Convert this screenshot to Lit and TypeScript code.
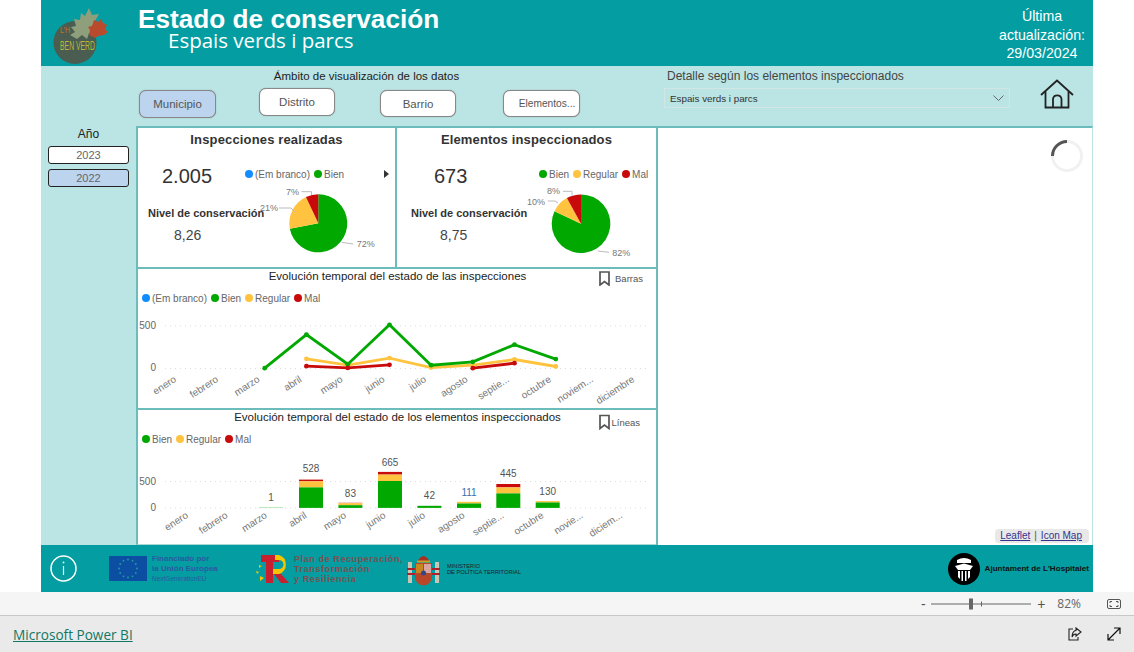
import { LitElement, html, css, svg } from "lit";
import { customElement } from "lit/decorators.js";

const GREEN = "#00a800";
const YELLOW = "#ffc33f";
const RED = "#c80a0a";
const BLUE = "#118dff";

type LegendItem = { label: string; color: string };

const legendBlue = { label: "(Em branco)", color: BLUE };
const legendGreen = { label: "Bien", color: GREEN };
const legendYellow = { label: "Regular", color: YELLOW };
const legendRed = { label: "Mal", color: RED };

const lineMonths = ["enero", "febrero", "marzo", "abril", "mayo", "junio", "julio", "agosto", "septie...", "octubre", "noviem...", "diciembre"];
const barMonths = ["enero", "febrero", "marzo", "abril", "mayo", "junio", "julio", "agosto", "septie...", "octubre", "novie...", "diciem..."];

const lineX = [264.7, 306.4, 347.8, 389.5, 431.1, 472.8, 514.5, 555.8];
const lineSeries = [
  { color: YELLOW, points: [[1, 358.8], [2, 365.2], [3, 358.1], [4, 367.5], [5, 365.2], [6, 359.5], [7, 366.5]] },
  { color: GREEN, points: [[0, 368.2], [1, 334.6], [2, 364.2], [3, 324.8], [4, 365.2], [5, 361.8], [6, 344.7], [7, 359.1]] },
  { color: RED, points: [[1, 366.2], [2, 367.9], [3, 364.8]] },
  { color: RED, points: [[5, 368.2], [6, 363.2]] },
];

// x, green top, yellow top, red top, label, label y
const bars: [number, number, number, number, string, number][] = [
  [299, 487.4, 481.3, 479.6, "528", 468.9],
  [338.4, 505.2, 503.2, 502.8, "83", 493],
  [378, 481, 474.6, 471.9, "665", 462],
  [417.4, 505.8, 505.8, 505.8, "42", 495],
  [457, 503.5, 501.8, 501.8, "111", 492.4],
  [496.3, 493.4, 487.4, 484, "445", 473.9],
  [535.7, 502.5, 501.1, 501.1, "130", 491.4],
];

function pieSlices(cx: number, cy: number, r: number, slices: [number, string][]) {
  let start = 0;
  return slices.map(([pct, color]) => {
    const a0 = (start / 100) * Math.PI * 2;
    start += pct;
    const a1 = (start / 100) * Math.PI * 2;
    const large = pct > 50 ? 1 : 0;
    const d = `M${cx} ${cy} L${cx + r * Math.sin(a0)} ${cy - r * Math.cos(a0)} A${r} ${r} 0 ${large} 1 ${cx + r * Math.sin(a1)} ${cy - r * Math.cos(a1)} Z`;
    return svg`<path d=${d} fill=${color}></path>`;
  });
}

function legend(items: LegendItem[]) {
  return items.map(
    (i) => html`<span class="legend-item"><i class="dot" style="background:${i.color}"></i>${i.label}</span>`
  );
}

function monthLabels(months: string[], ends: number[], y: number) {
  return months.map(
    (m, i) => svg`<text class="month" text-anchor="end" transform="translate(${ends[i]} ${y}) rotate(-33)">${m}</text>`
  );
}

@customElement("app-root")
export class AppRoot extends LitElement {
  static styles = css`
    :host {
      display: flex;
      flex-direction: column;
      height: 652px;
      width: 1134px;
      overflow: hidden;
      background: #fff;
      font-family: "Liberation Sans", Arial, sans-serif;
      color: #333;
    }

    .report {
      width: 1052px;
      height: 592px;
      margin-left: 41px;
      display: flex;
      flex-direction: column;
      background: #bbe4e4;
    }

    /* header */
    .header {
      height: 66px;
      flex: none;
      background: #049da2;
      color: #fff;
      display: flex;
    }
    .logo {
      margin: 8px 0 0 10px;
      width: 60px;
      height: 58px;
      flex: none;
    }
    .heading {
      margin-left: 27px;
      flex: 1;
    }
    .heading h1 {
      margin: 4px 0 0;
      font-size: 26.2px;
      line-height: 30px;
      font-weight: 700;
    }
    .heading p {
      margin: -6px 0 0 30px;
      font-size: 20.5px;
      line-height: 24px;
      font-family: "Open Sans", sans-serif;
      font-weight: 400;
    }
    .updated {
      width: 92px;
      margin-right: 5px;
      padding-top: 7px;
      text-align: center;
      font-size: 14.2px;
      line-height: 18.5px;
    }

    /* filters */
    .controls {
      height: 60px;
      flex: none;
      display: flex;
    }
    .scope {
      margin-left: 98px;
      width: 441px;
      flex: none;
    }
    .caption {
      font-size: 11.5px;
      line-height: 14px;
      padding-top: 3px;
      color: #222;
    }
    .scope .caption {
      text-align: center;
      margin-left: 14px;
    }
    .scope-buttons {
      display: flex;
      align-items: flex-start;
      margin-top: 5px;
    }
    .btn {
      box-sizing: border-box;
      height: 28px;
      width: 77px;
      display: flex;
      align-items: center;
      justify-content: center;
      background: #fff;
      border: 1px solid #888;
      border-radius: 7px;
      box-shadow: 0 0 1px #777;
      font-size: 11.5px;
      color: #555;
    }
    .btn.on {
      background: #bcd4ee;
    }
    .btn.small {
      font-size: 10.2px;
      padding-left: 11px;
    }
    .scope-buttons .b1 {
      margin-top: 2px;
    }
    .scope-buttons .b2 {
      margin-left: 43px;
      width: 76px;
    }
    .scope-buttons .b3 {
      margin: 2px 0 0 45px;
      width: 76px;
      height: 27px;
    }
    .scope-buttons .b4 {
      margin: 2px 0 0 47px;
      height: 27px;
    }
    .detail {
      margin-left: 84px;
      width: 346px;
      flex: none;
    }
    .detail .caption {
      color: #444;
      padding-left: 3px;
      font-size: 12px;
    }
    .dropdown {
      box-sizing: border-box;
      margin-top: 5px;
      height: 20px;
      display: flex;
      align-items: center;
      justify-content: space-between;
      padding: 0 5px;
      border: 1px solid #d2e6e6;
      font-size: 9.8px;
      color: #333;
    }
    .home {
      margin: 13px 0 0 30px;
      width: 34px;
      height: 30px;
    }

    /* main area */
    .main {
      height: 419px;
      flex: none;
      display: flex;
    }
    .years {
      width: 95px;
      flex: none;
      display: flex;
      flex-direction: column;
      align-items: center;
      padding-left: 1px;
      box-sizing: border-box;
    }
    .years .label {
      margin-top: 1px;
      margin-left: -1px;
      font-size: 12px;
      line-height: 14px;
      color: #222;
    }
    .year {
      box-sizing: border-box;
      width: 81px;
      height: 18px;
      margin-top: 5px;
      border: 1px solid #222;
      border-radius: 3px;
      background: #fff;
      text-align: center;
      font-size: 11px;
      line-height: 16px;
      color: #666;
      margin-left: -1px;
    }
    .year.on {
      background: #bcd4ee;
    }

    .panels {
      width: 520px;
      flex: none;
      display: flex;
      flex-direction: column;
    }
    .top-row {
      height: 141px;
      flex: none;
      display: flex;
    }
    .card {
      box-sizing: border-box;
      background: #fff;
      border-top: 2px solid #6cbcbc;
      border-left: 2px solid #6cbcbc;
    }
    .kpi-card {
      display: flex;
      flex-direction: column;
    }
    .kpi-card.realizadas {
      width: 259px;
      flex: none;
    }
    .kpi-card.elementos {
      flex: 1;
    }
    .kpi-card h2 {
      margin: 4px 0 0;
      font-size: 13px;
      line-height: 16px;
      font-weight: 700;
      color: #333;
      text-align: center;
      letter-spacing: 0.15px;
    }
    .kpi-body {
      display: flex;
    }
    .kpi {
      flex: none;
      white-space: nowrap;
    }
    .kpi .num {
      margin-top: 16px;
      font-size: 20px;
      line-height: 24px;
      color: #333;
    }
    .kpi .lbl {
      margin-top: 18px;
      font-size: 11px;
      line-height: 14px;
      font-weight: 700;
      color: #333;
    }
    .kpi .val {
      margin-top: 6px;
      font-size: 14px;
      line-height: 18px;
      color: #444;
    }
    .realizadas .kpi {
      width: 104px;
    }
    .realizadas .num {
      margin-left: 24px;
    }
    .realizadas .lbl {
      margin-left: 10px;
    }
    .realizadas .val {
      margin-left: 36px;
    }
    .elementos .kpi {
      width: 126px;
    }
    .elementos .num {
      margin-left: 37px;
    }
    .elementos .lbl {
      margin-left: 14px;
    }
    .elementos .val {
      margin-left: 43px;
    }
    .pie-col {
      flex: 1;
      min-width: 0;
    }
    .pie-col svg {
      display: block;
      overflow: visible;
    }
    .legend {
      display: flex;
      align-items: center;
      height: 14px;
      font-size: 10px;
      color: #666;
      white-space: nowrap;
    }
    .pie-col .legend {
      margin-top: 19px;
      padding-bottom: 1px;
    }
    .realizadas .legend {
      padding-left: 3px;
    }
    .elementos .legend {
      padding-left: 16px;
    }
    .legend-item {
      display: flex;
      align-items: center;
      margin-right: 4px;
    }
    .dot {
      width: 8px;
      height: 8px;
      border-radius: 50%;
      margin-right: 2px;
      flex: none;
    }
    .more {
      margin-left: auto;
      margin-right: 6px;
    }

    .chart-card {
      display: flex;
      flex-direction: column;
    }
    .chart-card.tall {
      height: 141px;
      flex: none;
    }
    .chart-card.short {
      height: 137px;
      flex: none;
      border-bottom: 1px solid #a8d8d8;
    }
    .chart-head {
      height: 21px;
      flex: none;
      display: flex;
      position: relative;
      justify-content: center;
    }
    .chart-head h3 {
      margin: 0 0 0 1px;
      font-size: 11.5px;
      line-height: 14px;
      font-weight: 400;
      color: #222;
    }
    .toggle {
      position: absolute;
      right: 13px;
      top: 2px;
      display: flex;
      align-items: center;
      font-size: 9.5px;
      color: #555;
    }
    .tall .toggle svg {
      margin-right: 5px;
    }
    .short .toggle svg {
      margin-right: 1px;
    }
    .short .toggle {
      right: 16px;
      top: 4px;
    }
    .chart-card .legend {
      padding-left: 4px;
      margin-top: 1px;
    }
    .chart-card svg.plot {
      display: block;
      flex: none;
      margin-top: 5px;
    }
    .month {
      font-size: 10px;
      fill: #777;
    }
    .axis {
      font-size: 10px;
      fill: #666;
    }
    .bar-label {
      font-size: 10px;
      fill: #555;
    }
    .pie-label {
      font-size: 9px;
      fill: #777;
    }

    .map {
      flex: 1;
      box-sizing: border-box;
      background: #fff;
      border-top: 2px solid #6cbcbc;
      border-left: 2px solid #6cbcbc;
      border-right: 1px solid #bbe4e4;
      display: flex;
      flex-direction: column;
      align-items: flex-end;
      justify-content: space-between;
    }
    .spinner {
      box-sizing: border-box;
      margin: 12px 9px 0 0;
      width: 32px;
      height: 32px;
    }
    .attribution {
      margin: 0 3px 2px 0;
      height: 14px;
      padding: 0 7px 0 5px;
      background: #e8e8e8;
      border-radius: 4px;
      font-size: 10px;
      line-height: 14px;
      color: #555;
    }
    .attribution a {
      color: #33338f;
      text-decoration: underline;
    }
    .attribution span {
      margin: 0 4px;
    }

    /* funding strip */
    .funding {
      height: 47px;
      flex: none;
      background: #049da2;
      display: flex;
      align-items: center;
    }
    .info {
      margin-left: 9px;
      flex: none;
    }
    .eu-flag {
      margin-left: 32px;
      flex: none;
    }
    .eu-text {
      margin-left: 5px;
      width: 103px;
      flex: none;
      font-size: 8px;
      line-height: 10px;
      font-weight: 700;
      color: #2a5aa0;
    }
    .eu-text small {
      font-size: 6.5px;
      font-weight: 400;
      display: block;
    }
    .tr-logo {
      flex: none;
    }
    .plan {
      margin-left: 5px;
      width: 113px;
      flex: none;
      font-size: 9px;
      line-height: 10px;
      font-weight: 700;
      color: #7d5050;
      letter-spacing: 0.6px;
      white-space: nowrap;
    }
    .arms {
      flex: none;
    }
    .ministry {
      margin-left: 6px;
      flex: 1;
      font-size: 5.7px;
      line-height: 6px;
      color: #222;
      white-space: nowrap;
    }
    .city {
      flex: none;
    }
    .city-name {
      margin: 0 4px 0 5px;
      font-size: 8.1px;
      font-weight: 700;
      color: #111;
      white-space: nowrap;
    }

    /* viewer chrome */
    .zoombar {
      height: 23px;
      flex: none;
      background: #f5f5f5;
      display: flex;
      align-items: center;
      justify-content: flex-end;
      font-size: 12px;
      color: #666;
    }
    .zoombar .sign {
      width: 10px;
      text-align: center;
      font-size: 14px;
      line-height: 14px;
      color: #555;
    }
    .slider {
      margin: 0 5px 0 3px;
      flex: none;
    }
    .pct {
      margin-left: 11px;
      font-family: "Open Sans", sans-serif;
      font-size: 12px;
    }
    .fit {
      margin: 0 13px 0 26px;
    }
    .bi-bar {
      flex: 1;
      box-sizing: border-box;
      background: #eaeaea;
      border-top: 1px solid #c8c8c8;
      display: flex;
      align-items: center;
      padding: 0 13px;
    }
    .bi-bar a {
      flex: 1;
      font-family: "Open Sans", sans-serif;
      font-size: 13.6px;
      color: #117865;
      text-decoration: underline;
    }
    .bi-bar svg {
      flex: none;
    }
    .bi-bar .expand {
      margin-left: 25px;
    }
  `;

  private renderHeader() {
    return html`
      <div class="header">
        <svg class="logo" viewBox="0 0 60 58">
          <circle cx="24" cy="34.500" r="21.500" fill="#4a5d50"></circle>
          <path d="M19 27 L24 24 L20 19 L25 18 L23 11 L29 12 L30 5 L34 8 L38 0 L41 7 L48 6 L44 13 L48 17 L43 20 L44 25 L38 25 L36 31 L31 27 L26 31 Z" fill="#8f9f7c"></path>
          <path d="M38 27 L39 22 L37 19 L41 18 L43 12 L47 14 L50 11 L52 15 L56 17 L54 21 L57 24 L53 27 L47 28 L44 30 Z" fill="#b94b2c"></path>
          <text x="9" y="25" font-size="9" fill="#c8702a" font-family="Liberation Sans" textLength="10" lengthAdjust="spacingAndGlyphs">L'H</text>
          <text x="9" y="42" font-size="13" fill="#b8b93a" font-family="Liberation Sans" textLength="35" lengthAdjust="spacingAndGlyphs">BEN VERD</text>
        </svg>
        <div class="heading">
          <h1>Estado de conservación</h1>
          <p>Espais verds i parcs</p>
        </div>
        <div class="updated">Última<br />actualización:<br />29/03/2024</div>
      </div>
    `;
  }

  private renderControls() {
    return html`
      <div class="controls">
        <div class="scope">
          <div class="caption">Ámbito de visualización de los datos</div>
          <div class="scope-buttons">
            <div class="btn on b1">Municipio</div>
            <div class="btn b2">Distrito</div>
            <div class="btn b3">Barrio</div>
            <div class="btn small b4">Elementos...</div>
          </div>
        </div>
        <div class="detail">
          <div class="caption">Detalle según los elementos inspeccionados</div>
          <div class="dropdown">
            <span>Espais verds i parcs</span>
            <svg width="11" height="6" viewBox="0 0 11 6"><path d="M.5 .5 L5.5 5.5 L10.5 .5" fill="none" stroke="#667" stroke-width="1"></path></svg>
          </div>
        </div>
        <svg class="home" viewBox="0 0 34 30" fill="none" stroke="#222" stroke-width="1.8">
          <path d="M1 16 L17 1.5 L33 16"></path>
          <path d="M5.500 12.500 V28.500 H28.500 V12.500"></path>
          <path d="M13 28.500 V20 A4.300 4.300 0 0 1 21.500 20 V28.500"></path>
        </svg>
      </div>
    `;
  }

  private renderYears() {
    return html`
      <div class="years">
        <div class="label">Año</div>
        <div class="year">2023</div>
        <div class="year on">2022</div>
      </div>
    `;
  }

  private renderKpis() {
    return html`
      <div class="top-row">
        <div class="card kpi-card realizadas">
          <h2>Inspecciones realizadas</h2>
          <div class="kpi-body">
            <div class="kpi">
              <div class="num">2.005</div>
              <div class="lbl">Nivel de conservación</div>
              <div class="val">8,26</div>
            </div>
            <div class="pie-col">
              <div class="legend">
                ${legend([legendBlue, legendGreen])}
                <svg class="more" width="5" height="8" viewBox="0 0 5 8"><path d="M0 0 L5 4 L0 8 Z" fill="#333"></path></svg>
              </div>
              <svg width="154" height="80" viewBox="242 182 154 80">
                ${pieSlices(318.3, 223.3, 29, [[72, GREEN], [21, YELLOW], [7, RED]])}
                <path d="M301.500 191.700 H311.500 V195 M279 208 H291 L295 212 M341.700 242.300 L353.300 244" fill="none" stroke="#bbb"></path>
                <text class="pie-label" x="286" y="195" text-anchor="start">7%</text>
                <text class="pie-label" x="260" y="211">21%</text>
                <text class="pie-label" x="356.700" y="247">72%</text>
              </svg>
            </div>
          </div>
        </div>
        <div class="card kpi-card elementos">
          <h2>Elementos inspeccionados</h2>
          <div class="kpi-body">
            <div class="kpi">
              <div class="num">673</div>
              <div class="lbl">Nivel de conservación</div>
              <div class="val">8,75</div>
            </div>
            <div class="pie-col">
              <div class="legend">${legend([legendGreen, legendYellow, legendRed])}</div>
              <svg width="133" height="80" viewBox="523 182 133 80">
                ${pieSlices(581, 223.7, 29.3, [[82, GREEN], [10, YELLOW], [8, RED]])}
                <path d="M563 191.300 H572 V195.700 M547.700 201 H555 L558 203 M597.700 251 L609 252.300" fill="none" stroke="#bbb"></path>
                <text class="pie-label" x="547" y="194">8%</text>
                <text class="pie-label" x="527" y="204.500">10%</text>
                <text class="pie-label" x="612.300" y="255.500">82%</text>
              </svg>
            </div>
          </div>
        </div>
      </div>
    `;
  }

  private renderLineChart() {
    const ends = [177, 219, 260.4, 302.4, 343.4, 385.4, 426.8, 468.4, 509.8, 551.8, 593.8, 635.2];
    return html`
      <div class="card chart-card tall">
        <div class="chart-head">
          <h3>Evolución temporal del estado de las inspecciones</h3>
          <div class="toggle">
            ${this.bookmark(11, 15)}
            <span>Barras</span>
          </div>
        </div>
        <div class="legend">${legend([legendBlue, legendGreen, legendYellow, legendRed])}</div>
        <svg class="plot" width="518" height="96" viewBox="138 310 518 96">
          <path d="M165 325.800 H650 M165 368.500 H650" stroke="#ddd" stroke-dasharray="1 4"></path>
          <text class="axis" x="156" y="329" text-anchor="end">500</text>
          <text class="axis" x="156" y="371" text-anchor="end">0</text>
          ${lineSeries.map((s) => {
            const pts = s.points.map(([i, y]) => [lineX[i], y]);
            return svg`
              <polyline points=${pts.map((p) => p.join(",")).join(" ")} fill="none" stroke=${s.color} stroke-width="2.800"></polyline>
              ${pts.map((p) => svg`<circle cx=${p[0]} cy=${p[1]} r="2.400" fill=${s.color}></circle>`)}
            `;
          })}
          ${monthLabels(lineMonths, ends, 381)}
        </svg>
      </div>
    `;
  }

  private renderBarChart() {
    const ends = [188.8, 228.4, 267.8, 307.4, 346.8, 386.4, 425.8, 465.4, 504.7, 544.4, 583.7, 623];
    const base = 507.9;
    return html`
      <div class="card chart-card short">
        <div class="chart-head">
          <h3>Evolución temporal del estado de los elementos inspeccionados</h3>
          <div class="toggle">
            ${this.bookmark(11, 16)}
            <span>Líneas</span>
          </div>
        </div>
        <div class="legend">${legend([legendGreen, legendYellow, legendRed])}</div>
        <svg class="plot" width="518" height="93" viewBox="138 451 518 93">
          <path d="M165 481.600 H650 M165 507.900 H650" stroke="#ddd" stroke-dasharray="1 4"></path>
          <text class="axis" x="156" y="485" text-anchor="end">500</text>
          <text class="axis" x="156" y="511" text-anchor="end">0</text>
          <text class="bar-label" x="271" y="501" text-anchor="middle">1</text>
          <rect x="259" y="507.300" width="24" height="0.700" fill="#a6e0a6"></rect>
          ${bars.map(([x, g, y, r, label, ly]) => svg`
            <rect x=${x} y=${r} width="24" height=${y - r} fill=${RED}></rect>
            <rect x=${x} y=${y} width="24" height=${g - y} fill=${YELLOW}></rect>
            <rect x=${x} y=${g} width="24" height=${base - g} fill=${GREEN}></rect>
            <text class="bar-label" x=${x + 12} y=${ly + 3.5} text-anchor="middle" style=${label === "111" ? "fill:#3a6fb0" : ""}>${label}</text>
          `)}
          ${monthLabels(barMonths, ends, 517)}
        </svg>
      </div>
    `;
  }

  private bookmark(w: number, h: number) {
    return html`<svg width=${w} height=${h} viewBox="0 0 11 15"><path d="M1 1 H10 V14 L5.500 10.500 L1 14 Z" fill="none" stroke="#555" stroke-width="1.700"></path></svg>`;
  }

  private renderMap() {
    return html`
      <div class="map">
        <svg class="spinner" viewBox="0 0 32 32">
          <circle cx="16" cy="16" r="14.500" fill="none" stroke="#f1f1f1" stroke-width="3"></circle>
          <path d="M1.500 16 A14.500 14.500 0 0 1 16 1.500" fill="none" stroke="#555" stroke-width="3"></path>
        </svg>
        <div class="attribution"><a>Leaflet</a><span>|</span><a>Icon Map</a></div>
      </div>
    `;
  }

  private renderFunding() {
    const stars = Array.from({ length: 12 }, (_, i) => {
      const a = (i / 12) * Math.PI * 2;
      return svg`<circle cx=${19 + 9 * Math.sin(a)} cy=${12.5 - 9 * Math.cos(a)} r="0.900" fill="#1ea0a0"></circle>`;
    });
    return html`
      <div class="funding">
        <svg class="info" width="27" height="27" viewBox="0 0 27 27" fill="none" stroke="#fff">
          <circle cx="13.500" cy="13.500" r="12.500" stroke-width="1.500"></circle>
          <path d="M13.500 11 V20" stroke-width="1.200"></path>
          <circle cx="13.500" cy="7.500" r="0.700" fill="#fff" stroke-width="0.500"></circle>
        </svg>
        <svg class="eu-flag" width="38" height="25" viewBox="0 0 38 25">
          <rect width="38" height="25" fill="#0b4ea2"></rect>
          ${stars}
        </svg>
        <div class="eu-text">Financiado por<br />la Unión Europea<small>NextGenerationEU</small></div>
        <svg class="tr-logo" width="34" height="28" viewBox="0 0 34 28">
          <path d="M6 0 H24 V7 H18 V28 H11 V7 H6 Z" fill="#c8202f"></path>
          <path d="M20 0 H24 A10 10 0 0 1 24 19 H18 V14 H24 A4.500 4.500 0 0 0 24 5 H20 Z" fill="#f6c400"></path>
          <path d="M19 19 H26 L34 28 H26 Z" fill="#c8202f"></path>
          <path d="M4 10 L7 11 L4 13 Z M1 16 L4 17 L2 19 Z M5 21 L9 23 L5 26 Z" fill="#f6c400"></path>
        </svg>
        <div class="plan">Plan de Recuperación,<br />Transformación<br />y Resiliencia</div>
        <svg class="arms" width="34" height="34" viewBox="0 0 34 34">
          <rect x="1" y="10" width="4" height="21" fill="#c9c4b4"></rect>
          <rect x="28" y="10" width="4" height="21" fill="#c9c4b4"></rect>
          <path d="M0 17 H33 M0 22 H33" stroke="#b0202a" stroke-width="2"></path>
          <path d="M8 11 H25 V25 A8.500 8.500 0 0 1 8 25 Z" fill="#b8472a"></path>
          <rect x="17" y="12" width="7" height="9" fill="#d8a4a4"></rect>
          <rect x="9" y="12" width="7" height="9" fill="#c9851f"></rect>
          <circle cx="16.500" cy="21" r="2.500" fill="#31478a"></circle>
          <path d="M10 10 Q16.500 -2 23 10 Z" fill="#a8301f"></path>
          <rect x="10" y="8.500" width="13" height="2" fill="#c9a22a"></rect>
        </svg>
        <div class="ministry">MINISTERIO<br />DE POLÍTICA TERRITORIAL</div>
        <svg class="city" width="32" height="32" viewBox="0 0 32 32">
          <circle cx="16" cy="16" r="16" fill="#000"></circle>
          <path d="M9 7 Q16 3 23 7 V10 H9 Z" fill="#fff"></path>
          <path d="M7 13 L16 10.500 L25 13 L22 17 H10 Z" fill="#fff"></path>
          <path d="M10 18 H12 V26 L10 24 Z M13.500 18 H15 V28 H13.500 Z M17 18 H18.500 V28 H17 Z M20 18 H22 V24 L20 26 Z" fill="#fff"></path>
        </svg>
        <div class="city-name">Ajuntament de L'Hospitalet</div>
      </div>
    `;
  }

  render() {
    return html`
      <div class="report">
        ${this.renderHeader()} ${this.renderControls()}
        <div class="main">
          ${this.renderYears()}
          <div class="panels">${this.renderKpis()} ${this.renderLineChart()} ${this.renderBarChart()}</div>
          ${this.renderMap()}
        </div>
        ${this.renderFunding()}
      </div>
      <div class="zoombar">
        <span class="sign">-</span>
        <svg class="slider" width="100" height="12" viewBox="0 0 100 12">
          <path d="M0 6 H100" stroke="#666"></path>
          <path d="M50.500 3.500 V8.500" stroke="#666"></path>
          <rect x="38" y="0.500" width="4" height="11" fill="#666"></rect>
        </svg>
        <span class="sign">+</span>
        <span class="pct">82%</span>
        <svg class="fit" width="14" height="10" viewBox="0 0 14 10" fill="none" stroke="#555">
          <rect x="0.500" y="0.500" width="13" height="9" rx="1.500"></rect>
          <path d="M3 4 V2.500 H5 M9 2.500 H11 V4 M3 6 V7.500 H5 M9 7.500 H11 V6"></path>
        </svg>
      </div>
      <div class="bi-bar">
        <a>Microsoft Power BI</a>
        <svg width="14" height="14" viewBox="0 0 14 14" fill="none" stroke="#222" stroke-width="1.100">
          <path d="M5 2 H1 V13 H10 V10"></path>
          <path d="M8 1 L13 5 L8 9 V7 C5.500 7 4.500 8.500 4 10 C4 6.500 5.500 3.500 8 3.500 Z"></path>
        </svg>
        <svg class="expand" width="14" height="14" viewBox="0 0 14 14" fill="none" stroke="#111" stroke-width="1.200">
          <path d="M1 13 L13 1 M7 1 H13 V7 M1 7 V13 H7"></path>
        </svg>
      </div>
    `;
  }
}
